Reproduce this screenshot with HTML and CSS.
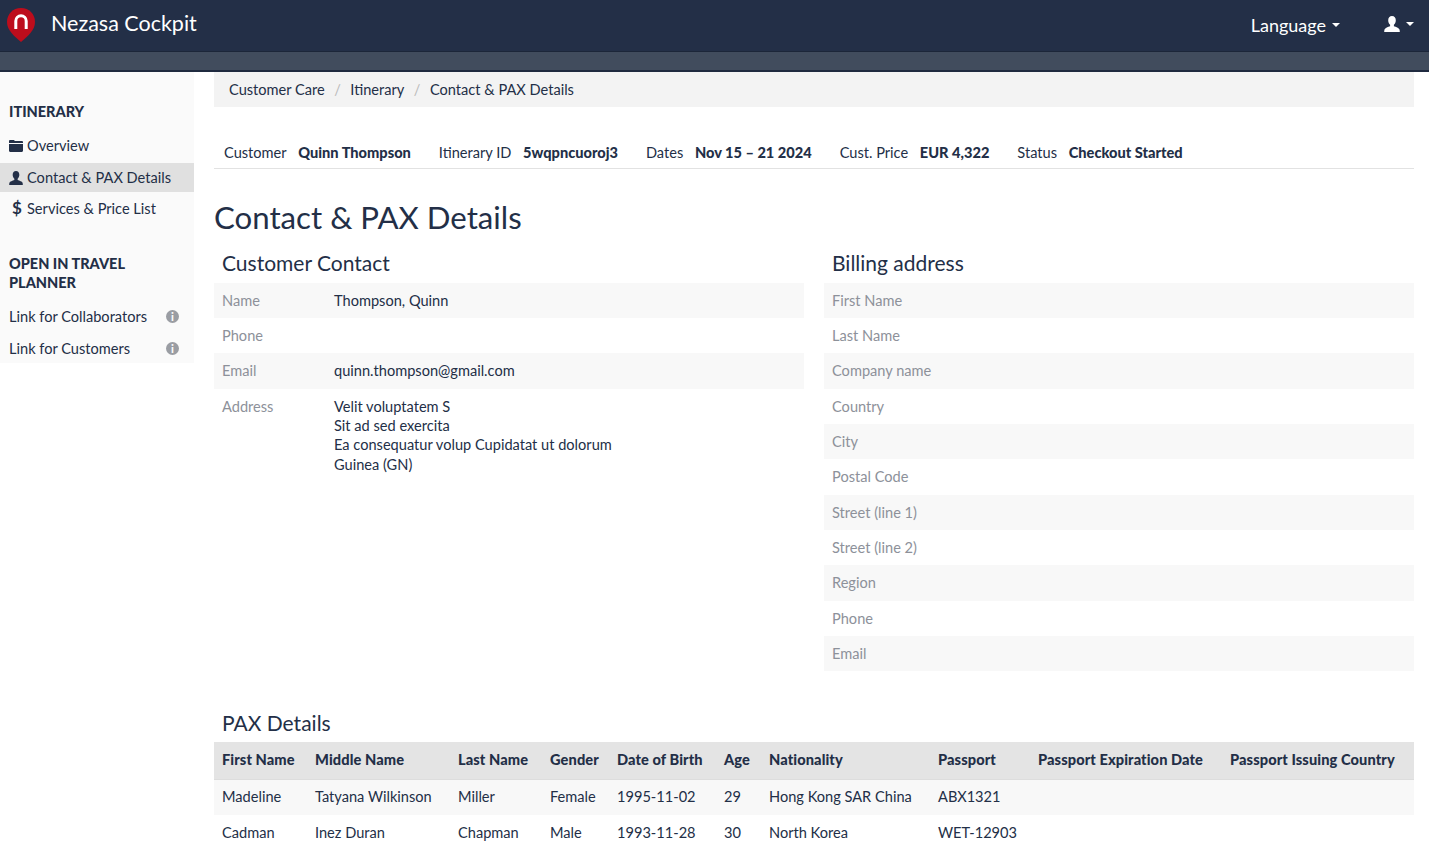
FILE: index.html
```html
<!DOCTYPE html>
<html lang="en">
<head>
<meta charset="utf-8">
<title>Nezasa Cockpit</title>
<link rel="stylesheet" href="styles.css">
</head>
<body>
<header class="topbar">
  <a class="brand">
    <svg class="logo" viewBox="0 0 28 34" width="28" height="34"><path d="M14 0C6 0 0 6 0 14c0 8 7 14 14 20 7-6 14-12 14-20C28 6 22 0 14 0z" fill="#bd0d1c"/><path d="M8.800 21v-8a5.200 5.200 0 0 1 10.400 0v8" fill="none" stroke="#fff" stroke-width="3"/></svg>
    <span class="brand-name">Nezasa Cockpit</span>
  </a>
  <nav class="top-nav">
    <span class="top-link">Language<i class="caret"></i></span>
    <span class="top-link user"><svg class="user-ico" viewBox="0 0 16 16" width="16" height="16"><path d="M8 0c2.400 0 3.800 1.800 3.800 4.200 0 1.900-.9 3.600-1.900 4.600v1.500c2 .8 5.100 1.600 5.600 3.200.2.700.3 1.600.3 2.500H.2c0-.9.100-1.800.3-2.500.5-1.600 3.600-2.400 5.600-3.200V8.800C5.100 7.800 4.200 6.100 4.200 4.200 4.200 1.800 5.600 0 8 0z" fill="#fff"/></svg><i class="caret"></i></span>
  </nav>
</header>
<div class="subbar"></div>
<div class="page">
  <aside class="sidebar">
    <h4 class="side-title first">ITINERARY</h4>
    <ul class="side-list">
      <li class="side-item i1"><svg class="side-ico" viewBox="0 0 14 12" width="14" height="12"><path d="M0 3V1.200C0 .5.500 0 1.200 0h3.600L6 1h6.800c.7 0 1.200.5 1.200 1.200V3zM0 4h14v6.800c0 .7-.5 1.200-1.200 1.200H1.200C.5 12 0 11.500 0 10.800z" fill="#232f47"/></svg>Overview</li>
      <li class="side-item i2 active"><svg class="side-ico" viewBox="0 0 16 16" width="14" height="14"><path d="M8 0c2.400 0 3.800 1.800 3.800 4.200 0 1.900-.9 3.600-1.900 4.600v1.500c2 .8 5.100 1.600 5.600 3.200.2.700.3 1.600.3 2.500H.2c0-.9.100-1.800.3-2.500.5-1.600 3.600-2.400 5.600-3.200V8.800C5.100 7.800 4.200 6.100 4.200 4.200 4.200 1.800 5.600 0 8 0z" fill="#232f47"/></svg>Contact &amp; PAX Details</li>
      <li class="side-item i3"><span class="dollar">$</span>Services &amp; Price List</li>
    </ul>
    <h4 class="side-title second">OPEN IN TRAVEL PLANNER</h4>
    <ul class="side-list">
      <li class="side-link l1">Link for Collaborators<span class="info">i</span></li>
      <li class="side-link l2">Link for Customers<span class="info">i</span></li>
    </ul>
  </aside>
  <main class="main">
    <ol class="crumbs">
      <li>Customer Care</li><li class="sep">/</li><li>Itinerary</li><li class="sep">/</li><li>Contact &amp; PAX Details</li>
    </ol>
    <div class="summary">
      <span class="lbl">Customer</span><b class="val">Quinn Thompson</b>
      <span class="lbl">Itinerary ID</span><b class="val">5wqpncuoroj3</b>
      <span class="lbl">Dates</span><b class="val">Nov 15 – 21 2024</b>
      <span class="lbl">Cust. Price</span><b class="val">EUR 4,322</b>
      <span class="lbl">Status</span><b class="val">Checkout Started</b>
    </div>
    <h1 class="title">Contact &amp; PAX Details</h1>
    <div class="columns">
      <section>
        <h3 class="sub">Customer Contact</h3>
        <dl class="rows">
          <div class="row"><dt>Name</dt><dd>Thompson, Quinn</dd></div>
          <div class="row"><dt>Phone</dt><dd></dd></div>
          <div class="row"><dt>Email</dt><dd>quinn.thompson@gmail.com</dd></div>
          <div class="row"><dt>Address</dt><dd>Velit voluptatem S<br>Sit ad sed exercita<br>Ea consequatur volup Cupidatat ut dolorum<br>Guinea (GN)</dd></div>
        </dl>
      </section>
      <section>
        <h3 class="sub">Billing address</h3>
        <dl class="rows">
          <div class="row"><dt>First Name</dt></div>
          <div class="row"><dt>Last Name</dt></div>
          <div class="row"><dt>Company name</dt></div>
          <div class="row"><dt>Country</dt></div>
          <div class="row"><dt>City</dt></div>
          <div class="row"><dt>Postal Code</dt></div>
          <div class="row"><dt>Street (line 1)</dt></div>
          <div class="row"><dt>Street (line 2)</dt></div>
          <div class="row"><dt>Region</dt></div>
          <div class="row"><dt>Phone</dt></div>
          <div class="row"><dt>Email</dt></div>
        </dl>
      </section>
    </div>
    <h3 class="sub pax">PAX Details</h3>
    <table class="pax-table">
      <colgroup><col class="c1"><col class="c2"><col class="c3"><col class="c4"><col class="c5"><col class="c6"><col class="c7"><col class="c8"><col class="c9"><col class="c10"></colgroup>
      <thead><tr><th>First Name</th><th>Middle Name</th><th>Last Name</th><th>Gender</th><th>Date of Birth</th><th>Age</th><th>Nationality</th><th>Passport</th><th>Passport Expiration Date</th><th>Passport Issuing Country</th></tr></thead>
      <tbody>
        <tr><td>Madeline</td><td>Tatyana Wilkinson</td><td>Miller</td><td>Female</td><td>1995-11-02</td><td>29</td><td>Hong Kong SAR China</td><td>ABX1321</td><td></td><td></td></tr>
        <tr><td>Cadman</td><td>Inez Duran</td><td>Chapman</td><td>Male</td><td>1993-11-28</td><td>30</td><td>North Korea</td><td>WET-12903</td><td></td><td></td></tr>
      </tbody>
    </table>
  </main>
</div>
</body>
</html>
```
FILE: styles.css
```css
* { box-sizing: border-box; }
html, body { margin: 0; height: 861px; overflow: hidden; }
body { font-family: "Lato", "Open Sans", sans-serif; font-size: 14.6px; line-height: 19.3px; color: #232f47; background: #fff; }
.topbar { height: 52px; background: #232f47; border-bottom: 1px solid #1c2639; display: flex; justify-content: space-between; color: #fff; }
.brand { display: flex; align-items: center; padding-left: 7px; }
.logo { margin: -2px 16px 0 0; }
.brand-name { font-size: 21.5px; position: relative; top: -2px; }
.top-nav { display: flex; align-items: center; padding-right: 15px; }
.top-link { font-size: 18px; display: flex; align-items: center; }
.user { margin-left: 44px; position: relative; top: -2px; }
.caret { display: inline-block; width: 0; height: 0; margin-left: 6px; border-top: 4px solid #fff; border-left: 4px solid transparent; border-right: 4px solid transparent; }
.subbar { height: 20px; background: #414c5d; border-bottom: 2px solid #1f2a3f; }
.page { display: flex; align-items: flex-start; }
.sidebar { width: 194px; height: 291px; background: #fafafa; flex: none; }
.side-title { margin: 0; padding: 0 9px; font-size: 14.5px; font-weight: 900; line-height: 19px; }
.side-title.first { padding-top: 29.500px; }
.side-title.second { margin-top: 31px; }
.side-list { list-style: none; margin: 0; padding: 0; }
.side-item { display: flex; align-items: center; padding-left: 9px; }
.i1 { margin-top: 15px; height: 20px; }
.i2 { margin-top: 7.500px; height: 29px; line-height: 27px; }
.i3 { margin-top: 2px; height: 29px; line-height: 27px; }
.active { background: #e0e0e0; }
.side-ico { margin-right: 4px; flex: none; }
.dollar { width: 18px; padding-left: 3px; font-size: 17px; font-weight: 700; position: relative; top: -1px; }
.side-link { display: flex; justify-content: space-between; align-items: center; padding: 0 15px 0 9px; height: 20px; }
.l1 { margin-top: 15px; }
.l2 { margin-top: 12px; }
.info { width: 13px; height: 13px; border-radius: 50%; background: #9a9da3; color: #fafafa; font-size: 11px; font-weight: 900; line-height: 13px; text-align: center; position: relative; top: -1px; }
.main { width: 1200px; margin-left: 20px; flex: none; }
.crumbs { list-style: none; margin: 0; padding: 0 15px; height: 35px; background: #f3f3f3; display: flex; align-items: center; gap: 9.5px; line-height: 19px; }
.sep { color: #bbb; }
.summary { margin-top: 35.500px; height: 26.500px; padding-left: 10px; border-bottom: 1px solid #e2e2e2; display: flex; white-space: nowrap; }
.lbl { margin-right: 11.700px; }
.val { margin-right: 28px; font-weight: 900; }
.title { margin: 29.500px 0 0; font-size: 31.2px; line-height: 36px; font-weight: 400; }
.columns { display: grid; grid-template-columns: 590px 590px; column-gap: 20px; margin-top: 16.500px; height: 460px; }
.sub { margin: 0; padding-left: 8px; font-size: 21px; line-height: 23px; font-weight: 400; height: 31.75px; }
.rows { margin: 0; }
.row { display: flex; padding: 7.800px 8px 8.200px; line-height: 19.35px; }
.row:nth-child(odd) { background: #f8f8f8; }
.row dt { width: 112px; color: #8d919a; flex: none; white-space: nowrap; }
.row dd { margin: 0; }
.pax { height: 31.25px; }
.pax-table { width: 1200px; table-layout: fixed; border-collapse: collapse; }
.c1 { width: 93px; } .c2 { width: 143px; } .c3 { width: 92px; } .c4 { width: 67px; } .c5 { width: 107px; }
.c6 { width: 45px; } .c7 { width: 169px; } .c8 { width: 100px; } .c9 { width: 192px; } .c10 { width: 192px; }
.pax-table th { background: #e4e4e4; text-align: left; font-weight: 900; padding: 6px 8px 8px; height: 37px; border-bottom: 1px solid #ddd; white-space: nowrap; letter-spacing: .1px; }
.pax-table td { padding: 7px 8px 9px; height: 36px; white-space: nowrap; }
.pax-table tbody tr:nth-child(odd) { background: #f8f8f8; }
```
